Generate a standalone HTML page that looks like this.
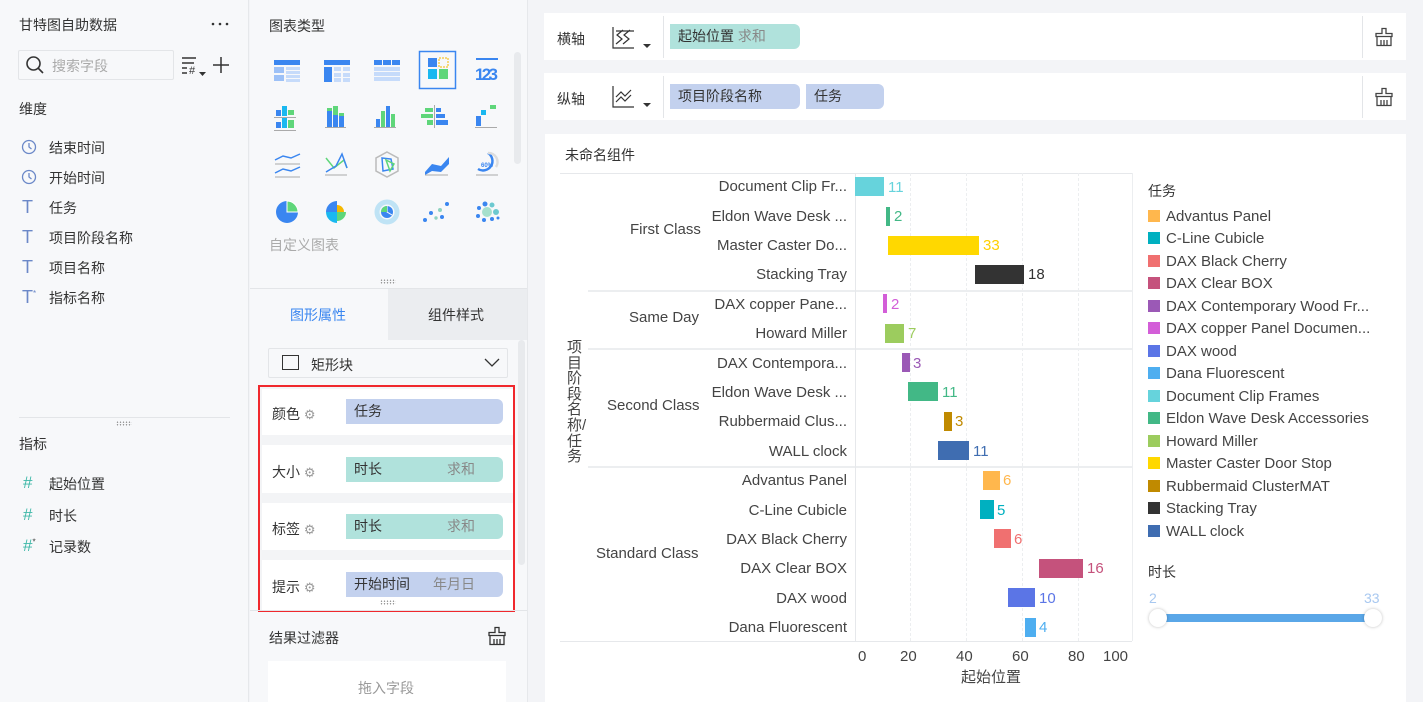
<!DOCTYPE html>
<html><head><meta charset="utf-8"><style>
*{margin:0;padding:0;box-sizing:border-box}
body{width:1423px;height:702px;overflow:hidden;background:#f3f4f7;font-family:"Liberation Sans","Noto Sans CJK SC",sans-serif;color:#333;position:relative;font-size:14px}
.a{position:absolute}
.t{position:absolute;white-space:nowrap}
.lp{left:0;top:0;width:249px;height:702px;background:#f7f8fa;border-right:1px solid #e6e8eb}
.mp{left:250px;top:0;width:278px;height:702px;background:#f7f8fa;border-right:1px solid #e6e8eb}
.fi{font-size:14px;color:#333}
.ic{color:#6b88c8}
.pill{position:absolute;height:25px;border-radius:0 6px 6px 0;font-size:14px;line-height:25px;padding-left:8px;color:#333}
.bl{background:#c3d1ee}.gr{background:#b0e2dc}
.card{background:#fff;position:absolute}
.lab{position:absolute;right:576px;font-size:15px;color:#444;white-space:nowrap;text-align:right}
.bar{position:absolute;height:19px}
.v{position:absolute;font-size:15px}
.lg{position:absolute;left:1148px;font-size:15px;color:#444;white-space:nowrap}
.lg i{display:inline-block;width:12px;height:12px;margin-right:6px;vertical-align:-1px}
.dots{position:absolute;width:16px;height:5px;background-image:radial-gradient(#999 0.7px,transparent 0.8px);background-size:3px 2.5px}
</style></head><body>
<div class="a lp"></div>
<div class="t" style="left:19px;top:15px;font-size:14px">甘特图自助数据</div>
<svg class="a" style="left:211px;top:22px" width="18" height="4"><circle cx="2" cy="2" r="1.3" fill="#333"/><circle cx="9" cy="2" r="1.3" fill="#333"/><circle cx="16" cy="2" r="1.3" fill="#333"/></svg>
<div class="a" style="left:18px;top:50px;width:156px;height:30px;border:1px solid #e3e5e8;background:#f7f8fa;border-radius:2px"></div>
<svg class="a" style="left:25px;top:55px" width="20" height="20"><circle cx="8.5" cy="8.5" r="6.5" fill="none" stroke="#333" stroke-width="1.6"/><path d="M13 13l5 5" stroke="#333" stroke-width="1.6"/></svg>
<div class="t" style="left:52px;top:56px;color:#aaa">搜索字段</div>
<svg class="a" style="left:180px;top:55px" width="28" height="24"><path d="M2 3h14M2 8h12M2 13h5M2 18h5" stroke="#333" stroke-width="1.5"/><text x="9" y="19" font-size="11" fill="#333" font-family="Liberation Sans">#</text><path d="M19 17h7l-3.5 4z" fill="#333"/></svg>
<svg class="a" style="left:212px;top:56px" width="18" height="18"><path d="M9 1v16M1 9h16" stroke="#333" stroke-width="1.5"/></svg>
<div class="t" style="left:19px;top:99px">维度</div>
<svg class="a" style="left:21px;top:139px" width="16" height="16"><circle cx="8" cy="8" r="6.5" fill="none" stroke="#6b88c8" stroke-width="1.3"/><path d="M8 4v4l2.5 2" stroke="#6b88c8" stroke-width="1.3" fill="none"/></svg>
<div class="t fi" style="left:49px;top:138px">结束时间</div>
<svg class="a" style="left:21px;top:169px" width="16" height="16"><circle cx="8" cy="8" r="6.5" fill="none" stroke="#6b88c8" stroke-width="1.3"/><path d="M8 4v4l2.5 2" stroke="#6b88c8" stroke-width="1.3" fill="none"/></svg>
<div class="t fi" style="left:49px;top:168px">开始时间</div>
<div class="t ic" style="left:22px;top:197px;font-size:18px">T</div><div class="t fi" style="left:49px;top:198px">任务</div>
<div class="t ic" style="left:22px;top:227px;font-size:18px">T</div><div class="t fi" style="left:49px;top:228px">项目阶段名称</div>
<div class="t ic" style="left:22px;top:257px;font-size:18px">T</div><div class="t fi" style="left:49px;top:258px">项目名称</div>
<div class="t ic" style="left:22px;top:287px;font-size:18px">T<sup style="font-size:8px">*</sup></div><div class="t fi" style="left:49px;top:288px">指标名称</div>
<div class="a" style="left:19px;top:417px;width:211px;height:1px;background:#e3e5e8"></div>
<div class="dots" style="left:116px;top:421px"></div>
<div class="t" style="left:19px;top:434px">指标</div>
<div class="t" style="left:23px;top:473px;color:#3fb8a8;font-size:17px">#</div><div class="t fi" style="left:49px;top:474px">起始位置</div>
<div class="t" style="left:23px;top:505px;color:#3fb8a8;font-size:17px">#</div><div class="t fi" style="left:49px;top:506px">时长</div>
<div class="t" style="left:23px;top:536px;color:#3fb8a8;font-size:17px">#<sup style="font-size:8px;color:#333">*</sup></div><div class="t fi" style="left:49px;top:537px">记录数</div>

<div class="a mp"></div>
<div class="t" style="left:269px;top:16px">图表类型</div>
<div class="a" style="left:514px;top:52px;width:7px;height:112px;background:#e8eaed;border-radius:4px"></div>
<svg class="a" style="left:268px;top:48px" width="240" height="180">
<g transform="translate(6,12)"><rect width="26" height="5" fill="#3a86f0"/><rect y="7" width="10" height="6" fill="#9dc1f7"/><rect x="12" y="7" width="14" height="3" fill="#c6dbfa"/><rect x="12" y="11" width="14" height="3" fill="#c6dbfa"/><rect y="15" width="10" height="6" fill="#9dc1f7"/><rect x="12" y="15" width="14" height="3" fill="#c6dbfa"/><rect x="12" y="19" width="14" height="3" fill="#c6dbfa"/></g>
<g transform="translate(56,12)"><rect width="26" height="5" fill="#3a86f0"/><rect y="7" width="8" height="15" fill="#3a86f0"/><rect x="10" y="7" width="7" height="4" fill="#c6dbfa"/><rect x="19" y="7" width="7" height="4" fill="#c6dbfa"/><rect x="10" y="13" width="7" height="4" fill="#c6dbfa"/><rect x="19" y="13" width="7" height="4" fill="#c6dbfa"/><rect x="10" y="18" width="7" height="4" fill="#c6dbfa"/><rect x="19" y="18" width="7" height="4" fill="#c6dbfa"/></g>
<g transform="translate(106,12)"><rect width="8" height="5" fill="#3a86f0"/><rect x="9" width="8" height="5" fill="#3a86f0"/><rect x="18" width="8" height="5" fill="#3a86f0"/><rect y="7" width="26" height="4" fill="#c6dbfa"/><rect y="12" width="26" height="4" fill="#c6dbfa"/><rect y="17" width="26" height="4" fill="#c6dbfa"/></g>
<rect x="151.5" y="3.5" width="36" height="37" fill="none" stroke="#3a86f0" stroke-width="1.5"/>
<g transform="translate(160,10)"><rect width="9" height="9" fill="#3a86f0"/><rect x="11" width="9" height="9" fill="none" stroke="#f5b800" stroke-dasharray="2 1"/><rect y="11" width="9" height="10" fill="#1ab8f0"/><rect x="11" y="11" width="9" height="10" fill="#5fd67a"/></g>
<rect x="208" y="10" width="22" height="2" fill="#3a86f0"/><text x="207" y="32" font-size="17" font-weight="bold" fill="#3a86f0" font-family="Liberation Sans" textLength="23">123</text>
<g fill="#3a86f0"><rect x="8" y="62" width="5" height="6"/><rect x="14" y="58" width="5" height="10" fill="#1ab8f0"/><rect x="20" y="62" width="6" height="5" fill="#5fd67a"/><rect x="8" y="74" width="5" height="6"/><rect x="14" y="70" width="5" height="10" fill="#1ab8f0"/><rect x="20" y="72" width="6" height="8" fill="#5fd67a"/><rect x="6" y="69" width="22" height="1" fill="#aaa"/><rect x="6" y="82" width="22" height="1" fill="#aaa"/>
<rect x="59" y="63" width="5" height="16"/><rect x="59" y="60" width="5" height="3" fill="#5fd67a"/><rect x="65" y="58" width="5" height="21" fill="#5fd67a"/><rect x="65" y="67" width="5" height="12"/><rect x="71" y="68" width="5" height="11"/><rect x="71" y="65" width="5" height="3" fill="#5fd67a"/><rect x="57" y="79" width="21" height="1" fill="#aaa"/>
<rect x="108" y="71" width="4" height="8"/><rect x="113" y="63" width="4" height="16" fill="#5fd67a"/><rect x="118" y="58" width="4" height="21"/><rect x="123" y="66" width="4" height="13" fill="#5fd67a"/><rect x="106" y="79" width="22" height="1" fill="#aaa"/>
<rect x="157" y="60" width="8" height="4" fill="#5fd67a"/><rect x="153" y="66" width="12" height="4" fill="#5fd67a"/><rect x="159" y="72" width="6" height="5" fill="#5fd67a"/><rect x="166" y="57" width="1" height="23" fill="#aaa"/><rect x="168" y="60" width="5" height="4"/><rect x="168" y="66" width="9" height="4"/><rect x="168" y="72" width="12" height="5"/>
<rect x="208" y="68" width="5" height="10"/><rect x="213" y="62" width="5" height="5" fill="#1ab8f0"/><rect x="222" y="57" width="6" height="4" fill="#5fd67a"/><rect x="207" y="79" width="22" height="1" fill="#aaa"/></g>
<g fill="none" stroke-width="1.5"><path d="M7 112l8-4 8 2 9-4M7 125l8-4 8 2 9-4" stroke="#3a86f0"/><path d="M7 116h25M7 129h25" stroke="#aaa" stroke-width="1"/>
<path d="M58 110l8 10 10-8 3 8" stroke="#5fd67a"/><path d="M58 124l10-6 6-12 5 14" stroke="#3a86f0"/><path d="M57 127h22" stroke="#aaa" stroke-width="1"/>
<path d="M119 104l11 6v13l-11 6-11-6v-13z" stroke="#bbb"/><path d="M114 110l9 1 2 10-10 2z" stroke="#3a86f0"/><path d="M118 112l8 4-4 7z" stroke="#5fd67a"/>
<path d="M208 127h22" stroke="#aaa" stroke-width="1"/><path d="M220 105a9 9 0 1 1-10 16" stroke="#3a86f0" stroke-width="2.5"/><path d="M220 105a9 9 0 0 1 8 14" stroke="#ddd" stroke-width="2.5"/></g>
<path d="M157 124l7-8 9 2 8-9v7l-8 8-9-1-7 4z" fill="#3a86f0"/><path d="M157 127h23" stroke="#aaa"/>
<text x="213" y="119" font-size="6" fill="#3a86f0" font-weight="bold" font-family="Liberation Sans">60%</text>
<circle cx="19" cy="164" r="11" fill="#3a86f0"/><path d="M19 153a11 11 0 0 1 11 11h-11z" fill="#5fd67a" stroke="#fff"/>
<path d="M69 153v11h-11a11 11 0 0 1 11-11z" fill="#3a86f0"/><path d="M69 157a7 7 0 0 1 7 7h-7z" fill="#f5b800"/><path d="M58 164h11v11a11 11 0 0 1-11-11z" fill="#1ab8f0"/><path d="M69 164h9a9 9 0 0 1-9 9z" fill="#5fd67a"/>
<circle cx="119" cy="164" r="10" fill="none" stroke="#bfe3f5" stroke-width="5"/><circle cx="119" cy="164" r="6" fill="#3a86f0"/><path d="M119 158v6l5 3" stroke="#fff" fill="none"/><path d="M113 164a6 6 0 0 1 6-6v6z" fill="#5fd67a"/>
<g fill="#3a86f0"><circle cx="157" cy="172" r="2"/><circle cx="163" cy="165" r="2"/><circle cx="168" cy="170" r="1.7" fill="#8fd3c0"/><circle cx="172" cy="162" r="2" fill="#8fd3c0"/><circle cx="174" cy="169" r="2"/><circle cx="179" cy="156" r="2"/>
<circle cx="219" cy="164" r="5" fill="#a6e0cc"/><circle cx="211" cy="160" r="2"/><circle cx="210" cy="168" r="2"/><circle cx="217" cy="156" r="2.5"/><circle cx="224" cy="157" r="2.5" fill="#6cc9d0"/><circle cx="228" cy="164" r="3" fill="#6cc9d0"/><circle cx="224" cy="171" r="2"/><circle cx="216" cy="172" r="2"/><circle cx="230" cy="170" r="1.5"/></g>
</svg>
<div class="t" style="left:269px;top:235px;color:#aaa">自定义图表</div>
<div class="dots" style="left:380px;top:279px"></div>
<div class="a" style="left:250px;top:288px;width:277px;height:1px;background:#e3e5e8"></div>
<div class="a" style="left:388px;top:289px;width:139px;height:51px;background:#ebedf0"></div>
<div class="t" style="left:290px;top:305px;color:#3a86f0">图形属性</div>
<div class="t" style="left:428px;top:305px;color:#333">组件样式</div>
<div class="a" style="left:268px;top:348px;width:240px;height:30px;border:1px solid #e3e5e8;background:#f7f8fa;border-radius:2px"></div>
<div class="a" style="left:282px;top:355px;width:17px;height:15px;border:1.5px solid #333"></div>
<div class="t" style="left:311px;top:355px">矩形块</div>
<svg class="a" style="left:484px;top:356px" width="16" height="12"><path d="M1 3l7 7 7-7" fill="none" stroke="#333" stroke-width="1.3"/></svg>
<div class="a" style="left:518px;top:340px;width:7px;height:225px;background:#e8eaed;border-radius:4px"></div>
<div class="a" style="left:258px;top:385px;width:257px;height:227px;border:2px solid #f0282d;background:#f3f4f6"></div>
<div class="a" style="left:262px;top:389px;width:251px;height:46px;background:#fff"></div>
<div class="a" style="left:262px;top:445px;width:251px;height:48px;background:#fff"></div>
<div class="a" style="left:262px;top:503px;width:251px;height:47px;background:#fff"></div>
<div class="a" style="left:262px;top:560px;width:251px;height:50px;background:#fff"></div>
<div class="t" style="left:272px;top:404px">颜色 <span style="color:#999;font-size:13px">⚙</span></div>
<div class="t" style="left:272px;top:462px">大小 <span style="color:#999;font-size:13px">⚙</span></div>
<div class="t" style="left:272px;top:519px">标签 <span style="color:#999;font-size:13px">⚙</span></div>
<div class="t" style="left:272px;top:577px">提示 <span style="color:#999;font-size:13px">⚙</span></div>
<div class="pill bl" style="left:346px;top:399px;width:157px">任务</div>
<div class="pill gr" style="left:346px;top:457px;width:157px">时长<span style="position:absolute;left:101px;color:#888">求和</span></div>
<div class="pill gr" style="left:346px;top:514px;width:157px">时长<span style="position:absolute;left:101px;color:#888">求和</span></div>
<div class="pill bl" style="left:346px;top:572px;width:157px">开始时间<span style="position:absolute;left:87px;color:#888">年月日</span></div>
<div class="dots" style="left:380px;top:600px"></div>
<div class="a" style="left:250px;top:610px;width:277px;height:1px;background:#e3e5e8"></div>
<div class="t" style="left:269px;top:628px">结果过滤器</div>
<svg class="a" style="left:487px;top:626px" width="20" height="20"><path d="M8 1.5h4v5h6v3H2v-3h6zM3 9.5v9h14v-9M7 13v5M10 13v5M13 13v5" fill="none" stroke="#333" stroke-width="1.3"/></svg>
<div class="a" style="left:268px;top:661px;width:238px;height:41px;background:#fff"></div>
<div class="t" style="left:358px;top:678px;color:#999">拖入字段</div>

<div class="card" style="left:544px;top:13px;width:862px;height:47px"></div>
<div class="card" style="left:544px;top:73px;width:862px;height:47px"></div>
<div class="a" style="left:663px;top:16px;width:1px;height:42px;background:#e3e5e8"></div>
<div class="a" style="left:663px;top:76px;width:1px;height:42px;background:#e3e5e8"></div>
<div class="a" style="left:1362px;top:16px;width:1px;height:42px;background:#e3e5e8"></div>
<div class="a" style="left:1362px;top:76px;width:1px;height:42px;background:#e3e5e8"></div>
<div class="t" style="left:557px;top:29px">横轴</div>
<div class="t" style="left:557px;top:89px">纵轴</div>
<svg class="a" style="left:612px;top:26px" width="42" height="26"><path d="M1 1v21h21" fill="none" stroke="#333" stroke-width="1.2"/><path d="M4 5h18M4 18l6-5-5-4 6-5M11 18l6-5-5-4 6-5" fill="none" stroke="#333" stroke-width="1.2"/><path d="M31 18h8l-4 4z" fill="#333"/></svg>
<svg class="a" style="left:612px;top:85px" width="42" height="26"><path d="M1 1v21h21" fill="none" stroke="#333" stroke-width="1.2"/><path d="M4 12l5-5 4 4 6-6M4 17l5-5 4 4 6-6" fill="none" stroke="#333" stroke-width="1.2"/><path d="M31 18h8l-4 4z" fill="#333"/></svg>
<div class="pill gr" style="left:670px;top:24px;width:130px">起始位置 <span style="color:#888">求和</span></div>
<div class="pill bl" style="left:670px;top:84px;width:130px">项目阶段名称</div>
<div class="pill bl" style="left:806px;top:84px;width:78px">任务</div>
<svg class="a" style="left:1374px;top:27px" width="20" height="20"><path d="M8 1.5h4v5h6v3H2v-3h6zM3 9.5v9h14v-9M7 13v5M10 13v5M13 13v5" fill="none" stroke="#444" stroke-width="1.3"/></svg>
<svg class="a" style="left:1374px;top:87px" width="20" height="20"><path d="M8 1.5h4v5h6v3H2v-3h6zM3 9.5v9h14v-9M7 13v5M10 13v5M13 13v5" fill="none" stroke="#444" stroke-width="1.3"/></svg>

<div class="card" style="left:545px;top:134px;width:861px;height:568px"></div>
<div class="t" style="left:565px;top:145px">未命名组件</div>
<div class="a" style="left:560px;top:173px;width:572px;height:1px;background:#e6e8eb"></div>
<div class="a" style="left:588px;top:290px;width:544px;height:2px;background:#eceef0"></div>
<div class="a" style="left:588px;top:348px;width:544px;height:2px;background:#eceef0"></div>
<div class="a" style="left:588px;top:466px;width:544px;height:2px;background:#eceef0"></div>
<div class="a" style="left:560px;top:641px;width:572px;height:1px;background:#e6e8eb"></div>
<div class="a" style="left:855px;top:173px;width:1px;height:468px;background:#e6e8eb"></div>
<div class="a" style="left:910px;top:173px;width:0;height:468px;border-left:1px dashed #eceef0"></div>
<div class="a" style="left:966px;top:173px;width:0;height:468px;border-left:1px dashed #eceef0"></div>
<div class="a" style="left:1022px;top:173px;width:0;height:468px;border-left:1px dashed #eceef0"></div>
<div class="a" style="left:1078px;top:173px;width:0;height:468px;border-left:1px dashed #eceef0"></div>
<div class="a" style="left:1132px;top:173px;width:1px;height:468px;background:#eceef0"></div>
<div class="t" style="left:567px;top:340px;width:18px;font-size:15px;line-height:15.6px;white-space:normal;color:#444">项目阶段名称/任务</div>
<div class="t" style="left:630px;top:221px;font-size:15px;color:#444">First Class</div>
<div class="t" style="left:629px;top:309px;font-size:15px;color:#444">Same Day</div>
<div class="t" style="left:607px;top:397px;font-size:15px;color:#444">Second Class</div>
<div class="t" style="left:596px;top:545px;font-size:15px;color:#444">Standard Class</div>

<div class="lab" style="top:178px">Document Clip Fr...</div>
<div class="lab" style="top:208px">Eldon Wave Desk ...</div>
<div class="lab" style="top:237px">Master Caster Do...</div>
<div class="lab" style="top:266px">Stacking Tray</div>
<div class="lab" style="top:296px">DAX copper Pane...</div>
<div class="lab" style="top:325px">Howard Miller</div>
<div class="lab" style="top:355px">DAX Contempora...</div>
<div class="lab" style="top:384px">Eldon Wave Desk ...</div>
<div class="lab" style="top:413px">Rubbermaid Clus...</div>
<div class="lab" style="top:443px">WALL clock</div>
<div class="lab" style="top:472px">Advantus Panel</div>
<div class="lab" style="top:502px">C-Line Cubicle</div>
<div class="lab" style="top:531px">DAX Black Cherry</div>
<div class="lab" style="top:560px">DAX Clear BOX</div>
<div class="lab" style="top:590px">DAX wood</div>
<div class="lab" style="top:619px">Dana Fluorescent</div>

<div class="bar" style="left:855px;top:177px;width:29px;background:#66d3dc"></div><div class="v" style="left:888px;top:179px;color:#66d3dc">11</div>
<div class="bar" style="left:886px;top:207px;width:4px;background:#42b886"></div><div class="v" style="left:894px;top:208px;color:#42b886">2</div>
<div class="bar" style="left:888px;top:236px;width:91px;background:#ffd800"></div><div class="v" style="left:983px;top:237px;color:#ffd000">33</div>
<div class="bar" style="left:975px;top:265px;width:49px;background:#333"></div><div class="v" style="left:1028px;top:266px;color:#333">18</div>
<div class="bar" style="left:883px;top:294px;width:4px;background:#d35ed8"></div><div class="v" style="left:891px;top:296px;color:#d35ed8">2</div>
<div class="bar" style="left:885px;top:324px;width:19px;background:#9ccc5e"></div><div class="v" style="left:908px;top:325px;color:#9ccc5e">7</div>
<div class="bar" style="left:902px;top:353px;width:8px;background:#9b59b6"></div><div class="v" style="left:913px;top:355px;color:#9b59b6">3</div>
<div class="bar" style="left:908px;top:382px;width:30px;background:#42b886"></div><div class="v" style="left:942px;top:384px;color:#42b886">11</div>
<div class="bar" style="left:944px;top:412px;width:8px;background:#c08a00"></div><div class="v" style="left:955px;top:413px;color:#c08a00">3</div>
<div class="bar" style="left:938px;top:441px;width:31px;background:#3f6db1"></div><div class="v" style="left:973px;top:443px;color:#3f6db1">11</div>
<div class="bar" style="left:983px;top:471px;width:17px;background:#ffb74d"></div><div class="v" style="left:1003px;top:472px;color:#ffb74d">6</div>
<div class="bar" style="left:980px;top:500px;width:14px;background:#00b0c0"></div><div class="v" style="left:997px;top:502px;color:#00b0c0">5</div>
<div class="bar" style="left:994px;top:529px;width:17px;background:#f07070"></div><div class="v" style="left:1014px;top:531px;color:#f07070">6</div>
<div class="bar" style="left:1039px;top:559px;width:44px;background:#c5527c"></div><div class="v" style="left:1087px;top:560px;color:#c5527c">16</div>
<div class="bar" style="left:1008px;top:588px;width:27px;background:#5b75e6"></div><div class="v" style="left:1039px;top:590px;color:#5b75e6">10</div>
<div class="bar" style="left:1025px;top:618px;width:11px;background:#4eaef0"></div><div class="v" style="left:1039px;top:619px;color:#4eaef0">4</div>

<div class="t" style="left:858px;top:648px;font-size:15px;color:#444">0</div>
<div class="t" style="left:900px;top:648px;font-size:15px;color:#444">20</div>
<div class="t" style="left:956px;top:648px;font-size:15px;color:#444">40</div>
<div class="t" style="left:1012px;top:648px;font-size:15px;color:#444">60</div>
<div class="t" style="left:1068px;top:648px;font-size:15px;color:#444">80</div>
<div class="t" style="left:1103px;top:648px;font-size:15px;color:#444">100</div>
<div class="t" style="left:961px;top:666px;font-size:15px;color:#444">起始位置</div>

<div class="t" style="left:1148px;top:181px;font-size:14px">任务</div>
<div class="lg" style="top:208px"><i style="background:#ffb74d"></i>Advantus Panel</div>
<div class="lg" style="top:230px"><i style="background:#00b0c0"></i>C-Line Cubicle</div>
<div class="lg" style="top:253px"><i style="background:#f07070"></i>DAX Black Cherry</div>
<div class="lg" style="top:275px"><i style="background:#c5527c"></i>DAX Clear BOX</div>
<div class="lg" style="top:298px"><i style="background:#9b59b6"></i>DAX Contemporary Wood Fr...</div>
<div class="lg" style="top:320px"><i style="background:#d35ed8"></i>DAX copper Panel Documen...</div>
<div class="lg" style="top:343px"><i style="background:#5b75e6"></i>DAX wood</div>
<div class="lg" style="top:365px"><i style="background:#4eaef0"></i>Dana Fluorescent</div>
<div class="lg" style="top:388px"><i style="background:#66d3dc"></i>Document Clip Frames</div>
<div class="lg" style="top:410px"><i style="background:#42b886"></i>Eldon Wave Desk Accessories</div>
<div class="lg" style="top:433px"><i style="background:#9ccc5e"></i>Howard Miller</div>
<div class="lg" style="top:455px"><i style="background:#ffd800"></i>Master Caster Door Stop</div>
<div class="lg" style="top:478px"><i style="background:#c08a00"></i>Rubbermaid ClusterMAT</div>
<div class="lg" style="top:500px"><i style="background:#333"></i>Stacking Tray</div>
<div class="lg" style="top:523px"><i style="background:#3f6db1"></i>WALL clock</div>
<div class="t" style="left:1148px;top:562px;font-size:14px">时长</div>
<div class="t" style="left:1149px;top:590px;font-size:14px;color:#a8c8f0">2</div>
<div class="t" style="left:1364px;top:590px;font-size:14px;color:#a8c8f0">33</div>
<div class="a" style="left:1160px;top:614px;width:214px;height:8px;background:#5aa7e8"></div>
<div class="a" style="left:1149px;top:609px;width:18px;height:18px;border-radius:50%;background:#fff;box-shadow:0 0 3px rgba(0,0,0,.25)"></div>
<div class="a" style="left:1364px;top:609px;width:18px;height:18px;border-radius:50%;background:#fff;box-shadow:0 0 3px rgba(0,0,0,.25)"></div>
</body></html>
